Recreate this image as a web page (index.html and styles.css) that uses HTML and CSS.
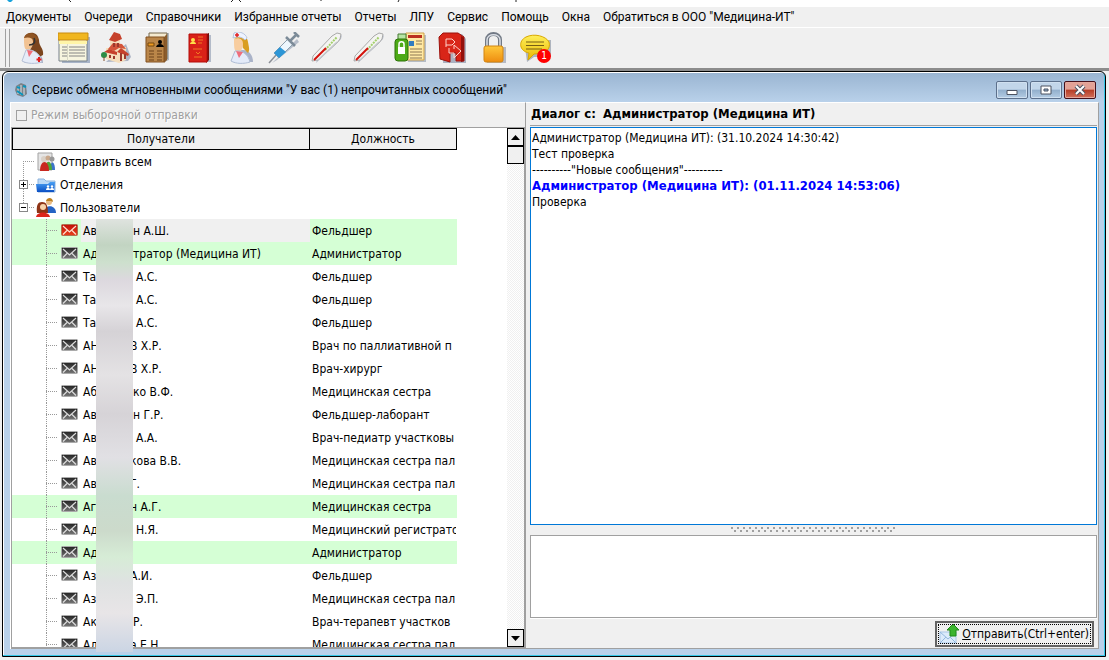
FILE: index.html
```
<!DOCTYPE html>
<html lang="ru">
<head>
    <meta charset="UTF-8">
    <meta name="viewport" content="width=device-width, initial-scale=1.0">
    <title>Сервис обмена мгновенными сообщениями</title>
    <link rel="stylesheet" href="styles.css">
</head>
<body>
    <!-- Общие значки -->
    <svg class="sprite" aria-hidden="true">
        <defs>
            <linearGradient id="dark" x2="0" y2="1"><stop stop-color="#222"/><stop offset="1" stop-color="#777"/></linearGradient>
            <linearGradient id="red" x2="0" y2="1"><stop stop-color="#c01008"/><stop offset="1" stop-color="#e8401c"/></linearGradient>
            <linearGradient id="gold" x2="0" y2="1"><stop stop-color="#ffc83a"/><stop offset="1" stop-color="#ee8d10"/></linearGradient>
            <linearGradient id="bubble" x2="0" y2="1"><stop stop-color="#ffef5a"/><stop offset="1" stop-color="#e9b800"/></linearGradient>
            <linearGradient id="blue" x2="0" y2="1"><stop stop-color="#4aa0f4"/><stop offset="1" stop-color="#0b4fc4"/></linearGradient>
        </defs>
        <symbol id="mail" viewBox="0 0 17 12">
            <rect x=".5" y=".5" width="16" height="11" rx="1" stroke="#aaa" fill="url(#dark)"/>
            <path d="M2 2l6.500 6L15 2M2 10.500l4-4M15 10.500l-4-4" fill="none" stroke="#ddd" stroke-width="1.200"/>
        </symbol>
        <symbol id="mail-new" viewBox="0 0 17 12">
            <rect x=".5" y=".5" width="16" height="11" rx="1" stroke="#b07050" fill="url(#red)"/>
            <path d="M2 2l6.500 6L15 2M2 10.500l4-4M15 10.500l-4-4" fill="none" stroke="#ffe0d0" stroke-width="1.200"/>
        </symbol>
        <symbol id="thermo" viewBox="0 0 32 32">
            <path d="M6 31L31 7l1-4-24 22z" fill="#b5bccb"/>
            <path d="M2 29l1-5L22 4l5-3 4 1-1 5-3 4L8 28z" fill="#f4f4f2" stroke="#a9a9a9"/>
            <path d="M8 28L27 10" stroke="#c4c8cc" stroke-width="1.500"/>
            <path d="M15 18L27 5" stroke="#a4d06c" stroke-width="2" stroke-dasharray="2 1"/>
            <path d="M4 28l12-12" stroke="#d3120c" stroke-width="2"/>
        </symbol>
    </svg>

    <div class="app-title">
        <svg width="760" height="7" aria-hidden="true">
            <path d="M7 0h6l-2 2h-2z" fill="#19a3dc"/>
            <path d="M69 0l2 2M233 0l-2 2M239 0l2 2M321 0v1M399 0l-1 2M516 0v2" stroke="#222" fill="none"/>
        </svg>
    </div>

    <nav class="menu">
        <a href="#">Документы</a>
        <a href="#">Очереди</a>
        <a href="#">Справочники</a>
        <a href="#">Избранные отчеты</a>
        <a href="#">Отчеты</a>
        <a href="#">ЛПУ</a>
        <a href="#">Сервис</a>
        <a href="#">Помощь</a>
        <a href="#">Окна</a>
        <a href="#">Обратиться в ООО "Медицина-ИТ"</a>
    </nav>

    <div class="toolbar">
        <button aria-label="Регистратура"><svg viewBox="0 0 32 32">
            <path d="M7 29c0-7 4-10 9-10 7 0 11 5 11 12H9z" fill="#aab3c8"/>
            <path d="M11 2C16-1 22 1 23 8c0 7 5 8 4 15l-6 3-7-6 1-11-6-5z" fill="#7c451d"/>
            <path d="M8 5c5-2 9 0 9 5s-3 9-6 8-3-5-3-13z" fill="#f2c393"/>
            <path d="M8 6c1-6 11-7 14 1l-3 3c-3-5-7-5-11-4z" fill="#8f5524"/>
            <path d="M6 29l4-11c7-1 14 3 16 12-6 2-15 2-20-1z" fill="#e6ecf8" stroke="#b6c0d6"/>
            <path d="M11 18l2 7 4-6z" fill="#f26d79"/><path d="M18 6c2 4 0 7-5 7" fill="none" stroke="#333" stroke-width="1.500"/>
            <path d="M23 25v5M20.500 27.500h5" stroke="#e02020" stroke-width="2"/></svg></button>
        <button aria-label="Расписание"><svg viewBox="0 0 32 32">
            <path d="M4 5h28v26H4z" fill="#a8b4c8"/><path d="M1 3h28v26H1z" fill="#f7f5df" stroke="#77818a"/>
            <path d="M0 1h30v7H0z" fill="#f0b61f" stroke="#c98c10"/><path d="M1 9h28v3H1z" fill="#fff5a8"/>
            <path d="M4 15h5M11 15h16M4 18h5M11 18h16M4 21h5M11 21h16M4 24h5M11 24h16" stroke="#858585"/><path d="M9.500 12v17" stroke="#d8d8c5"/></svg></button>
        <button aria-label="Учреждение"><svg viewBox="0 0 32 32">
            <path d="M6 30l22-1 3-4-5-13z" fill="#adb5c5"/><path d="M10 7h10v8h6v13l-7 3-13-4V16h4z" fill="#f5dfbc"/>
            <path d="M14 0L9 8l6 2 7-3-2-5z" fill="#c6422c"/><path d="M8 17l5-6 9 1 4 5-7-1-5 3z" fill="#d4553a"/>
            <path d="M4 20l5-3 8 3v3zM17 20l4-4 8 6-1 2z" fill="#c6422c"/>
            <path d="M14 11v4M18 11v4M10 23v3M14 24v3M21 21v8M25 22v5" stroke="#9c392c" stroke-width="2"/>
            <circle cx="4" cy="23" r="3" fill="#2c8d46"/><path d="M4 25v4" stroke="#84502c"/></svg></button>
        <button aria-label="Картотека"><svg viewBox="0 0 32 32">
            <path d="M9 1h18v27l-5 2z" fill="#afb6bd"/><path d="M7 1h18v26H7z" fill="#f4ead0" stroke="#77694c"/>
            <path d="M22 5l3-3v26l-3 3z" fill="#8a5c2c"/><path d="M4 5h18v25H4z" fill="#ba8649" stroke="#825020"/>
            <path d="M6 11h6v3H6z" fill="#ee9a20" stroke="#754811"/><circle cx="18" cy="10" r="2"/><path d="M14 15c1-4 7-4 8 0z"/>
            <path d="M7 19h5M15 19h5M7 22h5M15 22h5M7 25h5M15 25h5M7 28h5M15 28h5" stroke="#6c421d"/></svg></button>
        <button aria-label="Паспорт"><svg viewBox="0 0 32 32">
            <path d="M8 3h19v27H8z" fill="#b3bbc9"/><path d="M22 2l3-1v27l-3 3z" fill="#770d0a"/><path d="M5 2h18v28H5z" fill="#d92118" stroke="#b40c08"/>
            <circle cx="9" cy="8" r="2" fill="#ffe04a"/><path d="M6 12c0-3 6-3 6 0z" fill="#ffe04a"/>
            <path d="M14 5h5M14 8h5M14 11h4M9 17h9M12 20l2 2 2-2M10 25h8" stroke="#ef7a24" fill="none"/></svg></button>
        <button aria-label="Медсестра"><svg viewBox="0 0 32 32">
            <path d="M7 30c0-8 4-12 10-12s10 5 10 12z" fill="#aab3c8"/><path d="M8 6c4-6 13-4 14 4 1 6 2 8 0 11l-5-5-2-7z" fill="#d99d20"/>
            <path d="M8 7c5-2 9 0 9 5s-3 9-6 8-3-5-3-13z" fill="#f8cd9f"/>
            <path d="M7 6l1-5c5-3 12 1 13 5l-2 2C16 5 12 4 7 6z" fill="#eef3ff" stroke="#b8c5dd"/>
            <path d="M11 1v4M9 3h4" stroke="#e32020" stroke-width="1.500"/>
            <path d="M5 29l4-10c7-1 13 3 15 11-6 2-14 2-19-1z" fill="#e4ebf9" stroke="#afbdd5"/><path d="M10 19l3 7 4-6z" fill="#ef6d7b"/></svg></button>
        <button aria-label="Прививки"><svg viewBox="0 0 32 32">
            <path d="M4 31L29 7l2 3L9 28z" fill="#b6bdc9"/><path d="M1 31l8-9" stroke="#8b8f96" stroke-width="1.500"/>
            <path d="M6 21L20 7l5 5-14 14z" fill="#edf6fd" stroke="#8c9fae"/><path d="M6 21l6-6 6 5-7 6z" fill="#2d96d6"/>
            <path d="M18 5l9 9M22 9l7-7M26 0l5 5" stroke="#7c8b98" stroke-width="2.500"/></svg></button>
        <button aria-label="Температура"><svg><use href="#thermo"/></svg></button>
        <button aria-label="Измерения"><svg><use href="#thermo"/></svg></button>
        <button aria-label="Электронный документ"><svg viewBox="0 0 32 32">
            <path d="M14 3h18v27H14" fill="#b5bcc5"/><path d="M12 1h18v27H12z" fill="#ffe9a4" stroke="#d1a34a"/>
            <path d="M14 3h14v3H14z" fill="#bb3020"/><path d="M15 9h5v5h-5z" fill="#327cc0"/><path d="M22 9h6M22 12h6M16 17h12M16 20h12M16 23h12M16 26h12" stroke="#8c7752"/>
            <path d="M4 2h8v6H4z" fill="#b7e5a4" stroke="#477b35"/><rect x="1" y="7" width="13" height="22" rx="3" fill="#4daa16" stroke="#2c7208"/>
            <path d="M5 15v-3c0-3 5-3 5 0v3" fill="none" stroke="#fff" stroke-width="1.500"/><path d="M4 15h7v7H4z" fill="#fff"/></svg></button>
        <button aria-label="Реестр"><svg viewBox="0 0 32 32">
            <path d="M8 2h18l4 5v24H7z" fill="#aab1c0"/><path d="M3 5l4-4h15l6 4v24h-8v-8h-6v9l-10-3z" fill="#d92518" stroke="#9c120c"/>
            <path d="M25 4l3 2v23l-3 1z" fill="#94100c"/><path d="M10 15V7h6l3 3-3 3h-6M13 16v5h5v5l7-7-7-6v4" fill="none" stroke="#ffd3cb"/></svg></button>
        <button aria-label="Блокировка"><svg viewBox="0 0 32 32">
            <path d="M9 15h19v16H9z" fill="#b5bac5"/><path d="M9 15V8c0-8 13-8 13 0v7" fill="none" stroke="#717985" stroke-width="4"/>
            <path d="M9 15V8c0-7 13-7 13 0v7" fill="none" stroke="#dadee5" stroke-width="1.500"/><rect x="6" y="14" width="19" height="16" rx="2" fill="url(#gold)" stroke="#d28410"/></svg></button>
        <button class="messages" aria-label="Сообщения"><svg viewBox="0 0 32 32">
            <path d="M4 8h27v17H14l-7 5z" fill="#afb5bf"/><path d="M6 5c8-4 20-1 23 5 2 7-3 12-15 12l-6 6 1-7C-1 19-2 9 6 5z" fill="url(#bubble)" stroke="#d9a800"/>
            <path d="M6 10h18M6 13.500h18M6 17h16" stroke="#775e14"/></svg><span class="badge">1</span></button>
    </div>

    <main class="window">
        <div class="title-bar">
            <svg width="14" height="14" viewBox="0 0 14 14" aria-hidden="true">
                <path d="M2 3l5-3 5 2 1 9-4 3-6-2-2-5z" fill="#7c8288"/><path d="M4 3v8M7 2v10M10 3v9" stroke="#d7e4eb"/><path d="M3 4l3 1M3 8l6 4M9 3l3 1" stroke="#0795be" stroke-width="2"/>
            </svg>
            <h1>Сервис обмена мгновенными сообщениями "У вас (1) непрочитанных соообщений"</h1>
            <button class="win-btn" aria-label="Свернуть"><svg viewBox="0 0 14 12"><path d="M2 6.500h10v4H2z" fill="#fff" stroke="#4d5361"/></svg></button>
            <button class="win-btn" aria-label="Развернуть"><svg viewBox="0 0 14 12"><path d="M2 2h10v8H2z" fill="#fff" stroke="#4d5361"/><path d="M5 5h4v2H5z" fill="#8fb0d0" stroke="#4d5361"/></svg></button>
            <button class="win-btn close" aria-label="Закрыть"><svg viewBox="0 0 14 12"><path d="M3 2l8 8M11 2l-8 8" stroke="#4d5361" stroke-width="4"/><path d="M3 2l8 8M11 2l-8 8" stroke="#fff" stroke-width="2"/></svg></button>
        </div>

        <div class="content">
            <section class="recipients">
                <label class="mode"><input type="checkbox" disabled>Режим выборочной отправки</label>
                <div class="list">
                    <div class="tree">
                        <table>
                            <thead>
                                <tr><th class="col-name">Получатели</th><th>Должность</th></tr>
                            </thead>
                            <tbody>
                                <tr><td><div class="group first"><svg viewBox="0 0 20 20"><path d="M2 1h14v17H2z" fill="#e5e5e5" stroke="#a3a3a3"/><circle cx="8" cy="7" r="3" fill="#d9d0c6"/><circle cx="12" cy="6" r="2.500" fill="#c9a78a"/><circle cx="16" cy="7" r="2.500" fill="#999"/><path d="M14 18c0-10 5-10 5 0z" fill="#3d74c9"/><path d="M9 18c0-11 7-11 7 0z" fill="#4fa63a"/><path d="M4 19c0-12 9-12 9 0z" fill="#c92820"/></svg>Отправить всем</div></td><td></td></tr>
                                <tr><td><div class="group"><button class="toggle plus" aria-label="Раскрыть"></button><svg viewBox="0 0 20 20"><path d="M2 4h6l2 2h9v11H2z" fill="#bcd9f6" stroke="#8fb4dc"/><path d="M0 9l12 0 2-2h5l-1 10H1z" fill="url(#blue)"/><path d="M10 15c0-3 4-3 4 0zM14 15c0-3 4-3 4 0z" fill="#fff"/><circle cx="12" cy="11.500" r="1.200" fill="#fff"/><circle cx="16" cy="11.500" r="1.200" fill="#fff"/></svg>Отделения</div></td><td></td></tr>
                                <tr><td><div class="group last"><button class="toggle" aria-label="Свернуть"></button><svg viewBox="0 0 20 20"><circle cx="13" cy="4" r="3" fill="#e9bc85"/><path d="M10 3c1-4 7-4 7 1l-2-1z" fill="#bd8120"/><path d="M8 15c0-9 12-9 12 0z" fill="#2463c4"/><path d="M1 15c-1-8 1-11 5-11s6 3 6 11z" fill="#8f3517"/><circle cx="7" cy="9" r="3" fill="#f8d3aa"/><path d="M0 19c1-6 13-6 14 0z" fill="#dc251c"/></svg>Пользователи</div></td><td></td></tr>
                                <tr class="green current"><td><div class="user"><svg><use href="#mail-new"/></svg><span class="name"><b>Ав</b>н А.Ш.</span></div></td><td>Фельдшер</td></tr>
                                <tr class="green"><td><div class="user"><svg><use href="#mail"/></svg><span class="name"><b>Ад</b>тратор (Медицина ИТ)</span></div></td><td>Администратор</td></tr>
                                <tr><td><div class="user gap"><svg><use href="#mail"/></svg><span class="name"><b>Та</b>А.С.</span></div></td><td>Фельдшер</td></tr>
                                <tr><td><div class="user gap"><svg><use href="#mail"/></svg><span class="name"><b>Та</b>А.С.</span></div></td><td>Фельдшер</td></tr>
                                <tr><td><div class="user gap"><svg><use href="#mail"/></svg><span class="name"><b>Та</b>А.С.</span></div></td><td>Фельдшер</td></tr>
                                <tr><td><div class="user tuck"><svg><use href="#mail"/></svg><span class="name"><b>АН</b>В Х.Р.</span></div></td><td>Врач по паллиативной п</td></tr>
                                <tr><td><div class="user tuck"><svg><use href="#mail"/></svg><span class="name"><b>АН</b>В Х.Р.</span></div></td><td>Врач-хирург</td></tr>
                                <tr><td><div class="user"><svg><use href="#mail"/></svg><span class="name"><b>Аб</b>ко В.Ф.</span></div></td><td>Медицинская сестра</td></tr>
                                <tr><td><div class="user"><svg><use href="#mail"/></svg><span class="name"><b>Ав</b>н Г.Р.</span></div></td><td>Фельдшер-лаборант</td></tr>
                                <tr><td><div class="user gap"><svg><use href="#mail"/></svg><span class="name"><b>Ав</b>А.А.</span></div></td><td>Врач-педиатр участковы</td></tr>
                                <tr><td><div class="user tuck"><svg><use href="#mail"/></svg><span class="name"><b>Ав</b>кова В.В.</span></div></td><td>Медицинская сестра пал</td></tr>
                                <tr><td><div class="user tuck"><svg><use href="#mail"/></svg><span class="name"><b>Ав</b>Г.</span></div></td><td>Медицинская сестра пал</td></tr>
                                <tr class="green"><td><div class="user tuck"><svg><use href="#mail"/></svg><span class="name"><b>Аг</b>н А.Г.</span></div></td><td>Медицинская сестра</td></tr>
                                <tr><td><div class="user gap"><svg><use href="#mail"/></svg><span class="name"><b>Ад</b>Н.Я.</span></div></td><td>Медицинский регистрато</td></tr>
                                <tr class="green"><td><div class="user"><svg><use href="#mail"/></svg><span class="name"><b>Ад</b></span></div></td><td>Администратор</td></tr>
                                <tr><td><div class="user tuck"><svg><use href="#mail"/></svg><span class="name"><b>Аз</b>А.И.</span></div></td><td>Фельдшер</td></tr>
                                <tr><td><div class="user gap"><svg><use href="#mail"/></svg><span class="name"><b>Аз</b>Э.П.</span></div></td><td>Медицинская сестра пал</td></tr>
                                <tr><td><div class="user"><svg><use href="#mail"/></svg><span class="name"><b>Ак</b>Р.</span></div></td><td>Врач-терапевт участков</td></tr>
                                <tr><td><div class="user tuck"><svg><use href="#mail"/></svg><span class="name"><b>Ал</b>а Е.Н.</span></div></td><td>Медицинская сестра пал</td></tr>
                            </tbody>
                        </table>
                    </div>
                    <div class="scrollbar">
                        <button aria-label="Вверх"><svg viewBox="0 0 9 5"><path d="M0 5l4.500-5L9 5z"/></svg></button>
                        <div class="thumb"></div>
                        <button class="down" aria-label="Вниз"><svg viewBox="0 0 9 5"><path d="M0 0l4.500 5L9 0z"/></svg></button>
                    </div>
                </div>
                <div class="smudge"></div>
            </section>

            <section class="dialog">
                <h2>Диалог с: <span>Администратор (Медицина ИТ)</span></h2>
                <div class="history">
                    <p>Администратор (Медицина ИТ): (31.10.2024 14:30:42)</p>
                    <p>Тест проверка</p>
                    <p>----------"Новые сообщения"----------</p>
                    <p class="new">Администратор (Медицина ИТ): (01.11.2024 14:53:06)</p>
                    <p>Проверка</p>
                </div>
                <div class="splitter"></div>
                <textarea class="message" aria-label="Текст сообщения"></textarea>
                <div class="actions">
                    <button class="send">
                        <svg viewBox="0 0 20 20" aria-hidden="true"><path d="M1 8h16v11H1z" fill="#dcebfb" stroke="#a9c8e8"/><path d="M1 8l8 7 8-7M1 19l6-6M17 19l-6-6" fill="none" stroke="#93b9e0"/><path d="M14 0l6 6h-3v6h-6V6H8z" fill="#3bb42e" stroke="#218a1a"/></svg>
                        <span><u>О</u>тправить(Ctrl+enter)</span>
                    </button>
                </div>
            </section>
        </div>
    </main>
</body>
</html>
```
FILE: styles.css
```
* {
    box-sizing: border-box;
}

body {
    margin: 0;
    height: 100vh;
    display: flex;
    flex-direction: column;
    overflow: hidden;
    background-color: #f0f0f0;
    color: #000;
    font-family: "DejaVu Sans Condensed", "DejaVu Sans", sans-serif;
    font-size: 12px;
    line-height: 16px;
}

button {
    font: inherit;
    color: inherit;
    padding: 0;
    border: none;
    background: none;
}

.sprite {
    position: absolute;
    width: 0;
    height: 0;
}

.app-title {
    height: 7px;
    background-color: #fff;
}

.app-title svg {
    display: block;
}

/* Меню */
.menu {
    display: flex;
    gap: 13px;
    height: 21px;
    padding: 0 6px;
    border-bottom: 1px solid #fff;
    font-family: Roboto, sans-serif;
    line-height: 20px;
    white-space: nowrap;
}

.menu a {
    color: #000;
    text-decoration: none;
}

/* Панель инструментов */
.toolbar {
    display: flex;
    align-items: center;
    height: 43px;
    padding-left: 11px;
    border-bottom: 3px solid #8c8c8c;
    background: linear-gradient(#a0a0a0, #a0a0a0) 5px 1px / 1px 38px no-repeat,
        linear-gradient(#a0a0a0, #a0a0a0) 9px 1px / 1px 38px no-repeat;
}

.toolbar button {
    width: 42px;
    height: 32px;
    text-align: center;
}

.toolbar svg {
    display: block;
    width: 32px;
    height: 32px;
    margin: 0 auto;
}

.messages {
    position: relative;
}

.badge {
    position: absolute;
    right: 6px;
    bottom: 1px;
    width: 14px;
    height: 14px;
    border-radius: 50%;
    background-color: #f00;
    color: #fff;
    font-size: 10px;
    line-height: 14px;
}

/* Окно сообщений */
.window {
    flex: 1;
    min-height: 0;
    display: flex;
    flex-direction: column;
    margin: 0 3px 3px 2px;
    padding: 0 6px 7px 7px;
    border: 1px solid #000;
    border-radius: 6px 6px 0 0;
    background: linear-gradient(#99b4d1, #b9d1ea 30px, #b9d1ea);
    box-shadow: inset -1px -1px #35c8e8, inset 1px 1px #fff;
}

.title-bar {
    display: flex;
    align-items: center;
    gap: 2px;
    height: 30px;
    padding: 6px 3px 0 4px;
}

.title-bar h1 {
    flex: 1;
    margin: 0 0 0 2px;
    font-family: Roboto, sans-serif;
    font-size: 12px;
    font-weight: normal;
    white-space: nowrap;
}

.win-btn {
    width: 32px;
    height: 18px;
    border: 1px solid #5c708c;
    border-radius: 2px;
    background: linear-gradient(#c2d6ea 45%, #92afcc 50%, #b4cce4);
    box-shadow: inset 0 0 0 1px #d0e0f0;
}

.win-btn svg {
    display: block;
    width: 14px;
    height: 12px;
    margin: 0 auto;
}

.close {
    border-color: #45101a;
    background: linear-gradient(#e3a296 45%, #b63c25 50%, #d1705c);
    box-shadow: inset 0 0 0 1px #e5a99e;
}

.content {
    flex: 1;
    min-height: 0;
    display: grid;
    grid-template-columns: 516px 1fr;
    background-color: #f0f0f0;
}

.recipients {
    position: relative;
    min-height: 0;
    display: flex;
    flex-direction: column;
    border-top: 1px solid #fff;
    border-left: 1px solid #fff;
    border-right: 1px solid #a0a0a0;
}

.mode {
    display: flex;
    align-items: center;
    gap: 4px;
    height: 24px;
    padding-left: 5px;
    color: #a0a0a0;
    text-shadow: 1px 1px #fff;
}

.mode input {
    appearance: none;
    width: 11px;
    height: 11px;
    margin: 0;
    border: 1px solid #a0a0a0;
}

.list {
    flex: 1;
    min-height: 0;
    display: flex;
    justify-content: space-between;
    border: 1px solid #a0a0a0;
    border-bottom-width: 2px;
    background-color: #fff;
}

.tree {
    overflow: hidden;
}

table {
    width: 445px;
    table-layout: fixed;
    border-spacing: 0;
}

th {
    height: 22px;
    padding: 0;
    border: 1px solid #000;
    border-left: none;
    background-color: #f0f0f0;
    font-weight: normal;
}

.col-name {
    width: 298px;
    border-left: 1px solid #000;
}

td {
    height: 23px;
    padding: 0;
    overflow: hidden;
    white-space: nowrap;
}

td + td {
    padding-left: 2px;
    border-right: 1px solid #fff;
}

.green {
    background-color: #d5ffd5;
}

.green td + td {
    border-color: #d5ffd5;
}

.group,
.user {
    position: relative;
    display: flex;
    align-items: center;
    height: 23px;
}

.group {
    gap: 4px;
    padding-left: 24px;
}

.group svg {
    width: 20px;
    height: 20px;
}

.user svg {
    width: 17px;
    height: 12px;
    margin: 0 3px 1px 49px;
}

/* Линии дерева */
.group::before,
.user::before {
    content: "";
    position: absolute;
    top: 0;
    left: 11px;
    width: 12px;
    height: 23px;
    background: repeating-linear-gradient(#999 0 1px, transparent 1px 2px) 0 0 / 1px 100% no-repeat,
        repeating-linear-gradient(90deg, #999 0 1px, transparent 1px 2px) 0 11px / 100% 1px no-repeat;
}

.user::before {
    left: 34px;
}

.first::before {
    background-position: 0 11px;
}

.last::before {
    height: 12px;
}

.toggle {
    position: absolute;
    left: 7px;
    top: 7px;
    width: 9px;
    height: 9px;
    border: 1px solid #888;
    background: linear-gradient(#000, #000) center / 5px 1px no-repeat #fff;
}

.plus {
    background: linear-gradient(#000, #000) center / 5px 1px no-repeat,
        linear-gradient(#000, #000) center / 1px 5px no-repeat #fff;
}

.name {
    flex: 1;
    display: flex;
    height: 23px;
    padding-left: 2px;
    line-height: 24px;
}

.current .name {
    background-color: #f0f0f0;
}

.name b {
    width: 50px;
    font-weight: normal;
}

.gap b {
    width: 53px;
}

.tuck b {
    width: 47px;
}

.smudge {
    position: absolute;
    top: 116px;
    bottom: -3px;
    left: 85px;
    width: 37px;
    background: linear-gradient(#dfe3df, #c2d4c2 6%, #cde0cd 10%, #dcd8de 14%, #e8e6e9 20%, #d5d2d6 26%, #e4e2e4 36%, #d6d3d7 45%, #e1e0e4 55%, #c9dccf 64%, #ccdacb 72%, #d6ecd6 78%, #dfe2e2 84%, #e8e5e7 91%, #cbd5e4);
}

.scrollbar {
    display: flex;
    flex-direction: column;
    width: 17px;
    background: repeating-conic-gradient(#f0f0f0 0 25%, #fff 0 50%) 0 0 / 2px 2px;
}

.scrollbar button,
.thumb {
    width: 17px;
    height: 18px;
    border: 1px solid #000;
    background-color: #f0f0f0;
}

.scrollbar svg {
    display: block;
    width: 9px;
    height: 5px;
    margin: 0 auto;
}

.scrollbar .down {
    margin-top: auto;
}

/* Диалог */
.dialog {
    min-width: 0;
    min-height: 0;
    display: flex;
    flex-direction: column;
    padding: 0 1px 0 4px;
    border-top: 1px solid #fff;
    border-right: 1px solid #a0a0a0;
    border-bottom: 1px solid #a0a0a0;
}

.dialog h2 {
    height: 23px;
    margin: 0 0 1px;
    padding-left: 1px;
    border-bottom: 1px solid #a0a0a0;
    font-size: 13px;
    line-height: 22px;
}

.dialog h2 span {
    margin-left: 3px;
}

.history {
    flex: 1;
    min-height: 0;
    padding: 2px 1px;
    border: 1px solid #0078d7;
    background-color: #fff;
}

.history p {
    margin: 0;
}

.history .new {
    color: #00f;
    font-size: 13px;
    font-weight: bold;
}

.splitter {
    width: 165px;
    height: 10px;
    margin: 0 auto;
    background: conic-gradient(at 2px 2px, transparent 75%, #a0a0a0 0) 0 2px / 6px 4px repeat-x,
        conic-gradient(at 2px 2px, transparent 75%, #a0a0a0 0) 3px 5px / 6px 4px repeat-x;
}

.message {
    display: block;
    width: 100%;
    height: 83px;
    padding: 2px;
    border: 1px solid #a0a0a0;
    background-color: #fff;
    font: inherit;
    resize: none;
}

.actions {
    display: flex;
    justify-content: flex-end;
    padding: 2px 3px 1px;
    border-top: 1px solid #fff;
}

.send {
    display: flex;
    align-items: center;
    gap: 3px;
    height: 26px;
    padding: 0 3px 0 2px;
    border: 2px solid #646464;
    outline: 1px dotted #000;
    outline-offset: -4px;
}

.send svg {
    width: 20px;
    height: 20px;
}
```
